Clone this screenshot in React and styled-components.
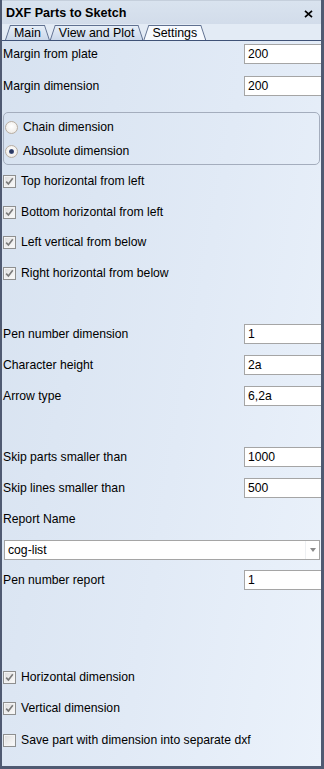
import React from "react";
import styled, { createGlobalStyle } from "styled-components";

const Global = createGlobalStyle`
  html, body { margin: 0; padding: 0; background: #4f5a72; }
  body { font-family: "Liberation Sans", Arial, sans-serif; font-size: 12.2px; color: #000; }
  * { box-sizing: border-box; }
`;

const Window = styled.div`
  width: 324px;
  height: 769px;
  display: flex;
  flex-direction: column;
  border-left: 2px solid #4f5a72;
  border-right: 3px solid #4f5a72;
  border-bottom: 3px solid #4f5a72;
  overflow: hidden;
  background: #dfe7f2;
`;

const TitleBar = styled.div`
  height: 24px;
  flex-shrink: 0;
  display: flex;
  align-items: center;
  justify-content: space-between;
  padding: 1px 8px 0 4px;
  background: linear-gradient(to bottom, #d9e3ef, #d2dcea);
  border-top: 1px solid #c5cfdc;
`;

const Title = styled.span`
  font-weight: bold;
  font-size: 12.6px;
`;

const Close = styled.svg`
  width: 9px;
  height: 8px;
  margin-top: 1px;
`;

const TabStrip = styled.div`
  height: 17px;
  flex-shrink: 0;
  display: flex;
  align-items: flex-end;
  padding-left: 3px;
  background: #e3ebf5;
  border-bottom: 1px solid #3f5277;
`;

const Tab = styled.div`
  position: relative;
  height: 15px;
  padding: 0 9px;
  display: flex;
  align-items: center;
  font-size: 12.4px;
  line-height: 1;
  z-index: ${(p) => (p.$active ? 2 : 1)};
  background: #5f7090;
  clip-path: polygon(0 100%, 5px 0, calc(100% - 5px) 0, 100% 100%);
  &::before {
    content: "";
    position: absolute;
    inset: 1px 1px 0 1px;
    background: ${(p) =>
      p.$active
        ? "#f7fafe"
        : "linear-gradient(to bottom, #e6eef8, #cbd8ea)"};
    clip-path: polygon(0 100%, 4.6px 0, calc(100% - 4.6px) 0, 100% 100%);
  }
  span {
    position: relative;
    padding-top: 1px;
  }
`;

const Content = styled.div`
  flex: 1;
  display: flex;
  flex-direction: column;
  overflow: hidden;
  background: linear-gradient(100deg, #d7e2f0 0%, #e1eaf6 55%, #ebf2fb 100%);
`;

const Row = styled.div`
  display: grid;
  grid-template-columns: 242px 100px;
  align-items: center;
  height: 20px;
  margin-top: ${(p) => p.$mt}px;
`;

const Label = styled.span`
  padding-left: 1px;
  white-space: nowrap;
`;

const TextBox = styled.div`
  height: 20px;
  border: 1px solid #a5a5a5;
  background: #fff;
  padding: 0 0 0 3px;
  display: flex;
  align-items: center;
`;

const Group = styled.div`
  margin: ${(p) => p.$mt}px 1px 0 1px;
  height: 53px;
  border: 1px solid #a4adbd;
  border-radius: 5px;
  padding: 4px 0 3px 1px;
  display: flex;
  flex-direction: column;
  gap: 4px;
`;

const OptionRow = styled.div`
  display: flex;
  align-items: center;
  height: 20px;
  gap: ${(p) => p.$gap || 0}px;
  margin-top: ${(p) => p.$mt || 0}px;
  padding-left: ${(p) => p.$pl || 0}px;
  white-space: nowrap;
`;

const Radio = styled.span`
  width: 13px;
  height: 13px;
  border-radius: 50%;
  border: 1px solid #b8aea2;
  background: radial-gradient(circle at 50% 40%, #ffffff 0%, #f3f1ee 60%, #e4e0da 100%);
  display: flex;
  align-items: center;
  justify-content: center;
  flex-shrink: 0;
  &::after {
    content: "";
    width: 5px;
    height: 5px;
    border-radius: 50%;
    background: ${(p) => (p.$checked ? "radial-gradient(circle, #2b3a63 40%, #6e82b0 100%)" : "transparent")};
  }
`;

const Box = styled.span`
  width: 13px;
  height: 13px;
  border: 1px solid #8e8f8f;
  background: linear-gradient(135deg, #dcdcdc 0%, #f0f0f0 60%, #fbfbfb 100%);
  display: flex;
  align-items: center;
  justify-content: center;
  flex-shrink: 0;
  box-shadow: inset 0 0 0 1px #f4f4f4;
`;

const Check = () => (
  <svg width="9" height="9" viewBox="0 0 9 9">
    <path d="M1.2 4.6 L3.4 7 L7.8 1.2" fill="none" stroke="#7a7a7a" strokeWidth="1.6" />
  </svg>
);

const CheckRow = ({ mt, checked, children }) => (
  <OptionRow $mt={mt} $gap={5} $pl={1}>
    <Box>{checked && <Check />}</Box>
    <span>{children}</span>
  </OptionRow>
);

const Combo = styled.div`
  margin: ${(p) => p.$mt}px 1px 0 2px;
  height: 20px;
  border: 1px solid #a5a5a5;
  background: #fff;
  display: flex;
  align-items: center;
`;

const ComboText = styled.span`
  flex: 1;
  padding-left: 3px;
`;

const ComboArrow = styled.span`
  width: 14px;
  height: 100%;
  display: flex;
  align-items: center;
  justify-content: center;
  border-left: 1px solid #eef0f3;
  &::after {
    content: "";
    border-left: 3px solid transparent;
    border-right: 3px solid transparent;
    border-top: 4px solid #8a8a8a;
  }
`;

const Field = ({ mt, label, value }) => (
  <Row $mt={mt}>
    <Label>{label}</Label>
    <TextBox>{value}</TextBox>
  </Row>
);

export default function App() {
  return (
    <>
      <Global />
      <Window>
        <TitleBar>
          <Title>DXF Parts to Sketch</Title>
          <Close viewBox="0 0 9 8">
            <path d="M1 0.8 L8 7.2 M8 0.8 L1 7.2" stroke="#000" strokeWidth="1.7" />
          </Close>
        </TitleBar>
        <TabStrip>
          <Tab><span>Main</span></Tab>
          <Tab><span>View and Plot</span></Tab>
          <Tab $active><span>Settings</span></Tab>
        </TabStrip>
        <Content>
          <Field mt={3} label="Margin from plate" value="200" />
          <Field mt={12} label="Margin dimension" value="200" />
          <Group $mt={16}>
            <OptionRow $gap={5}>
              <Radio />
              <span>Chain dimension</span>
            </OptionRow>
            <OptionRow $gap={5}>
              <Radio $checked />
              <span>Absolute dimension</span>
            </OptionRow>
          </Group>
          <CheckRow mt={6} checked>Top horizontal from left</CheckRow>
          <CheckRow mt={11} checked>Bottom horizontal from left</CheckRow>
          <CheckRow mt={10} checked>Left vertical from below</CheckRow>
          <CheckRow mt={11} checked>Right horizontal from below</CheckRow>
          <Field mt={41} label="Pen number dimension" value="1" />
          <Field mt={11} label="Character height" value="2a" />
          <Field mt={11} label="Arrow type" value="6,2a" />
          <Field mt={41} label="Skip parts smaller than" value="1000" />
          <Field mt={11} label="Skip lines smaller than" value="500" />
          <OptionRow $mt={11} $pl={1}>Report Name</OptionRow>
          <Combo $mt={11}>
            <ComboText>cog-list</ComboText>
            <ComboArrow />
          </Combo>
          <Field mt={10} label="Pen number report" value="1" />
          <CheckRow mt={77} checked>Horizontal dimension</CheckRow>
          <CheckRow mt={11} checked>Vertical dimension</CheckRow>
          <CheckRow mt={12}>Save part with dimension into separate dxf</CheckRow>
        </Content>
      </Window>
    </>
  );
}
